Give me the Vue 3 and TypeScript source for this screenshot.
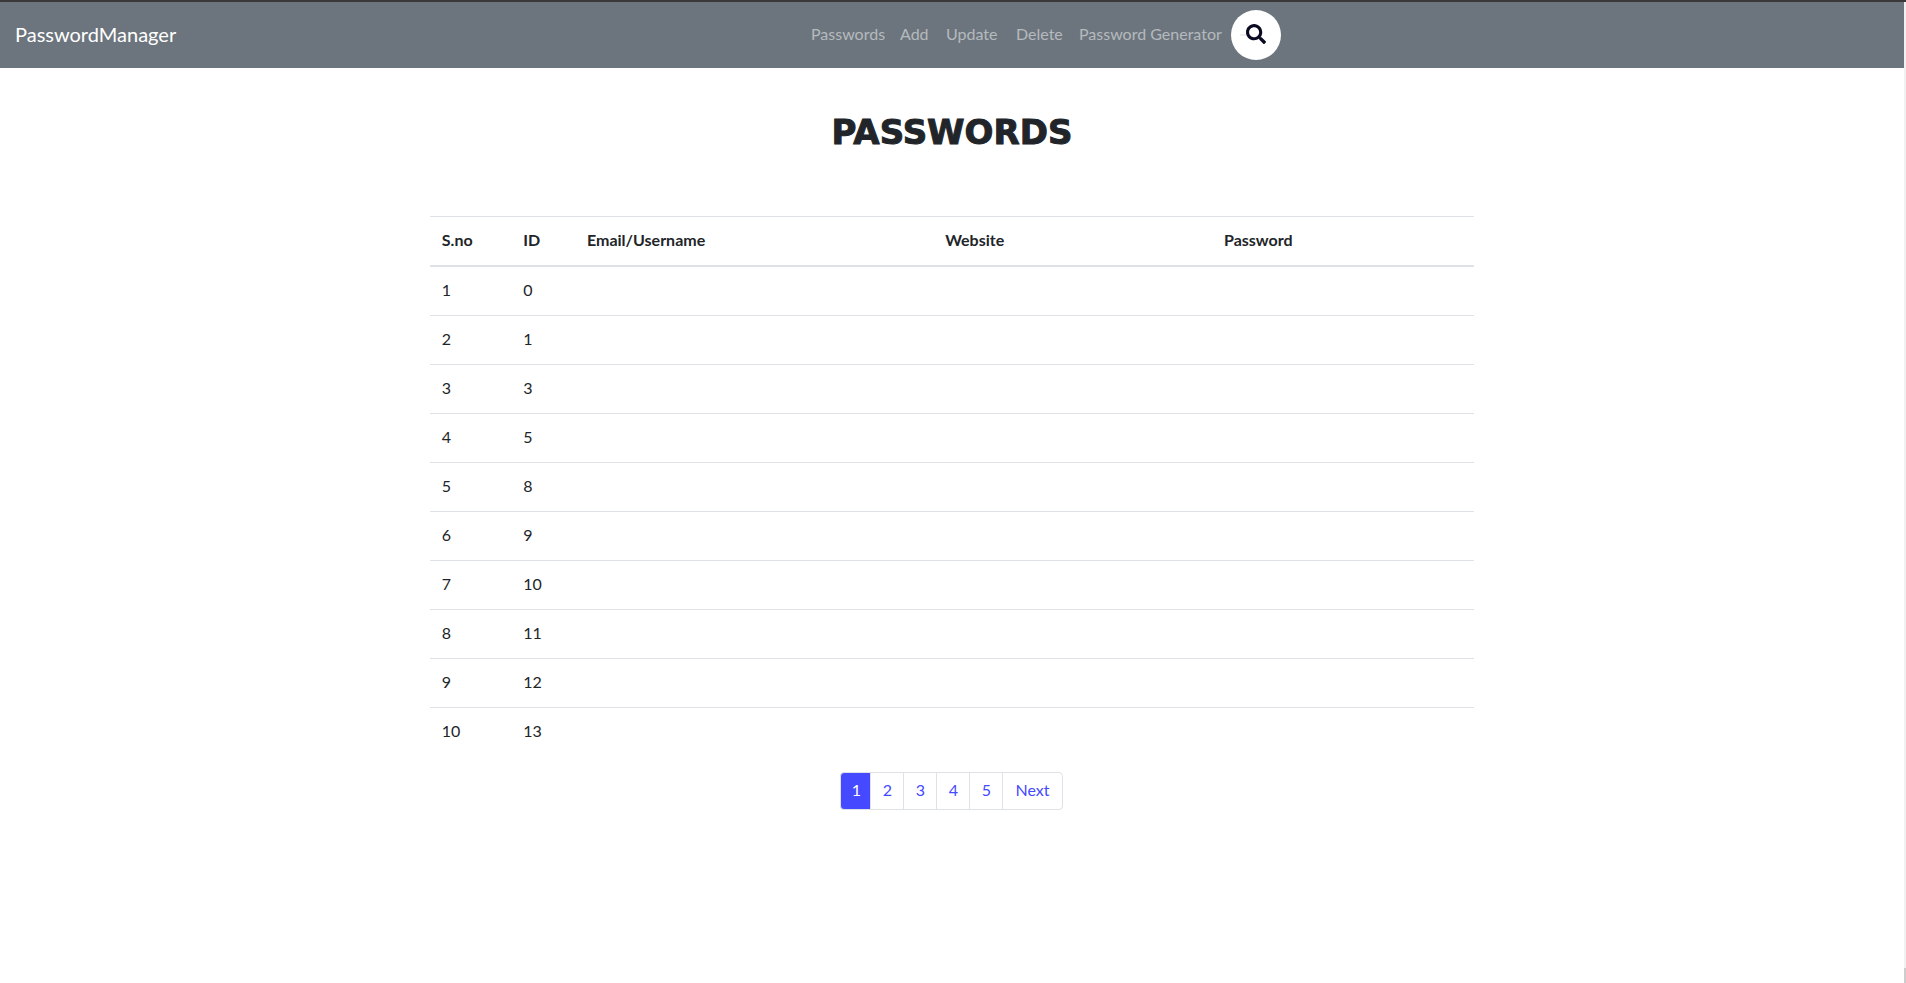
<script setup lang="ts">
import { ref } from 'vue'

interface Entry {
  sno: number
  id: number
  email: string
  website: string
  password: string
}

const links: { label: string; size: string }[] = [
  { label: 'Passwords', size: 'w-passwords' },
  { label: 'Add', size: 'w-add' },
  { label: 'Update', size: 'w-update' },
  { label: 'Delete', size: 'w-delete' },
  { label: 'Password Generator', size: 'w-generator' },
]

const ids: number[] = [0, 1, 3, 5, 8, 9, 10, 11, 12, 13]
const entries: Entry[] = ids.map((id, i) => ({ sno: i + 1, id, email: '', website: '', password: '' }))

const pages: string[] = ['1', '2', '3', '4', '5', 'Next']
const current = ref<string>('1')
</script>

<template>
  <div class="page">
    <header class="navbar">
      <a class="brand" href="#">PasswordManager</a>
      <nav class="links" aria-label="Main">
        <a v-for="link in links" :key="link.label" href="#" class="nav-link" :class="link.size">{{ link.label }}</a>
        <button class="search" type="button" aria-label="Search">
          <span class="caret-line"></span>
          <svg viewBox="0 0 512 512" width="20" height="20" aria-hidden="true">
            <path
              fill="#0a0a23"
              d="M505 442.7L405.3 343c-4.5-4.5-10.6-7-17-7H372c27.6-35.3 44-79.7 44-128C416 93.1 322.9 0 208 0S0 93.1 0 208s93.1 208 208 208c48.3 0 92.700-16.4 128-44v16.3c0 6.4 2.5 12.5 7 17l99.7 99.7c9.4 9.4 24.6 9.4 33.9 0l28.3-28.3c9.4-9.4 9.4-24.6.1-34zM208 336c-70.7 0-128-57.2-128-128 0-70.7 57.2-128 128-128 70.7 0 128 57.2 128 128 0 70.7-57.2 128-128 128z"
            />
          </svg>
        </button>
      </nav>
    </header>

    <main class="content">
      <h1 class="title">PASSWORDS</h1>
      <table class="table">
        <colgroup>
          <col class="c-sno" />
          <col class="c-id" />
          <col class="c-email" />
          <col class="c-site" />
          <col class="c-pass" />
        </colgroup>
        <thead>
          <tr>
            <th scope="col">S.no</th>
            <th scope="col">ID</th>
            <th scope="col">Email/Username</th>
            <th scope="col">Website</th>
            <th scope="col">Password</th>
          </tr>
        </thead>
        <tbody>
          <tr v-for="entry in entries" :key="entry.id">
            <td>{{ entry.sno }}</td>
            <td>{{ entry.id }}</td>
            <td>{{ entry.email }}</td>
            <td>{{ entry.website }}</td>
            <td>{{ entry.password }}</td>
          </tr>
        </tbody>
      </table>
      <nav class="pagination" aria-label="Pages">
        <a
          v-for="page in pages"
          :key="page"
          href="#"
          class="page-link"
          :class="{ active: page === current }"
          @click.prevent="current = page"
          >{{ page }}</a
        >
      </nav>
    </main>
    <div class="scroll-track"><div class="scroll-thumb"></div></div>
  </div>
</template>

<style>
body {
  margin: 0;
  background: #fff;
}
</style>

<style scoped>
.page {
  position: relative;
  box-sizing: border-box;
  min-height: 100vh;
  padding-right: 2px;
  border-top: 2px solid #3a3838;
  font-family: Lato, 'Open Sans', sans-serif;
  font-size: 16px;
  line-height: 24px;
  color: #212529;
}
.navbar {
  display: grid;
  grid-template-columns: 1fr auto 1fr;
  align-items: center;
  box-sizing: border-box;
  height: 66px;
  padding: 0 15px;
  background: #6c757d;
}
.brand {
  padding-bottom: 2px;
  color: #fff;
  font-size: 20px;
  line-height: 30px;
  text-decoration: none;
}
.links {
  grid-column: 2;
  display: flex;
  align-items: center;
  margin-left: 180px;
}
.nav-link {
  box-sizing: border-box;
  padding: 7px 8px 9px;
  color: rgba(255, 255, 255, 0.5);
  text-decoration: none;
  white-space: nowrap;
}
.w-passwords {
  width: 89px;
}
.w-add {
  width: 46px;
}
.w-update {
  width: 70px;
}
.w-delete {
  width: 63px;
}
.w-generator {
  width: 160px;
}
.search {
  position: relative;
  display: flex;
  align-items: center;
  justify-content: center;
  width: 50px;
  height: 50px;
  padding: 0 0 2px;
  border: 0;
  border-radius: 50%;
  background: #fff;
}
.caret-line {
  position: absolute;
  left: 9px;
  top: 24px;
  width: 6px;
  height: 2px;
  background: #f0f0f0;
}
.content {
  display: flex;
  flex-direction: column;
  align-items: center;
}
.title {
  margin: 44px 0 64px;
  font-family: 'DejaVu Sans', sans-serif;
  font-size: 34px;
  font-weight: 700;
  line-height: 40px;
  -webkit-text-stroke: 1px #212529;
}
.table {
  width: 54.85%;
  min-width: 600px;
  table-layout: fixed;
  border-collapse: collapse;
}
.c-sno {
  width: 7.8%;
}
.c-id {
  width: 6.1%;
}
.c-email {
  width: 34.3%;
}
.c-site {
  width: 26.7%;
}
.c-pass {
  width: 25.1%;
}
.table th,
.table td {
  height: 24px;
  padding: 11px 12px 13px;
  border-top: 1px solid #dee2e6;
  text-align: left;
}
.table thead th {
  border-bottom: 2px solid #dee2e6;
}
.pagination {
  display: flex;
  margin-top: 16px;
}
.page-link {
  box-sizing: border-box;
  min-width: 34px;
  padding: 5px 12px 7px;
  margin-left: -1px;
  border: 1px solid #dee2e6;
  color: #4549ff;
  text-align: center;
  text-decoration: none;
}
.page-link:not(:last-child) {
  min-width: 34px;
  padding-left: 11px;
  padding-right: 11px;
}
.page-link:first-child {
  min-width: 31px;
  padding-left: 10px;
  padding-right: 9px;
  border-radius: 4px 0 0 4px;
}
.page-link:last-child {
  border-radius: 0 4px 4px 0;
}
.page-link.active {
  background: #4549ff;
  color: #fff;
}
.scroll-track {
  position: absolute;
  top: 0;
  right: 0;
  bottom: 0;
  display: flex;
  flex-direction: column;
  justify-content: flex-end;
  width: 2px;
  background: #f1f1f1;
}
.scroll-thumb {
  height: 15px;
  background: #cdcdcd;
}
</style>
